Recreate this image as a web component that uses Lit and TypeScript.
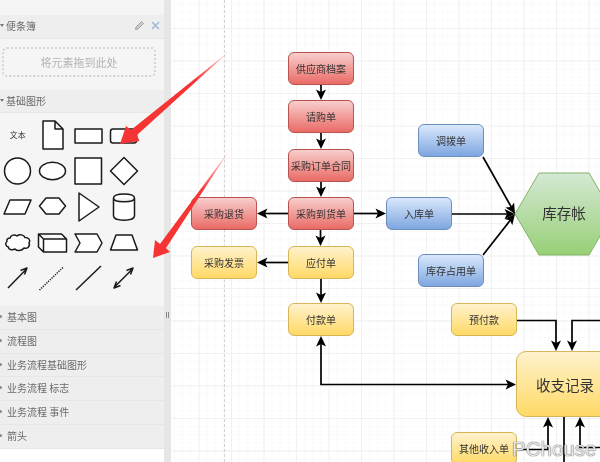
import { LitElement, html, css, svg } from "lit";
import { customElement } from "lit/decorators.js";

type Node = { t: string; x: number; y: number; c: string };
const NODES: Node[] = [
  { t: "供应商档案", x: 288, y: 52, c: "red" },
  { t: "请购单", x: 288, y: 100, c: "red" },
  { t: "采购订单合同", x: 288, y: 149, c: "red" },
  { t: "采购到货单", x: 288, y: 197, c: "red" },
  { t: "采购退货", x: 191, y: 197, c: "red" },
  { t: "采购发票", x: 191, y: 246, c: "yellow" },
  { t: "应付单", x: 288, y: 246, c: "yellow" },
  { t: "付款单", x: 288, y: 303, c: "yellow" },
  { t: "调拨单", x: 418, y: 124, c: "blue" },
  { t: "入库单", x: 386, y: 197, c: "blue" },
  { t: "库存占用单", x: 418, y: 254, c: "blue" },
  { t: "预付款", x: 451, y: 303, c: "yellow" },
  { t: "其他收入单", x: 451, y: 432, c: "yellow" },
];

const LINES: string[] = [
  "M321 84V96",
  "M321 133V145",
  "M321 181V193",
  "M320.500 230V242",
  "M321 279V299",
  "M288 213.500H261",
  "M354 213.500H382",
  "M288 262.500H261",
  "M321 340V384.500H512",
  "M483 157L513 210",
  "M451 214H511",
  "M483 255L512 218",
  "M516 320.500H556V347",
  "M600 320.500H572V347",
  "M516 449.500H548V421",
  "M564 417V462",
  "M600 447.500H580V421",
];

const HEADS: [number, number, number][] = [
  [321, 100, 90], [321, 149, 90], [321, 197, 90], [320.5, 246, 90], [321, 303, 90],
  [257, 213.5, 180], [386, 213.5, 0], [257, 262.5, 180],
  [321, 336, -90], [516, 384.5, 0],
  [515, 214, 60], [515, 214, 0], [515, 214, -51],
  [556, 351, 90], [572, 351, 90], [548, 417, -90], [580, 417, -90],
];

const SECTIONS = ["基本图", "流程图", "业务流程基础图形", "业务流程 标志", "业务流程 事件", "箭头"];

const SHAPES = [
  svg``,
  svg`<path d="M8 4H20L28 12V32H8Z M20 4V12H28"/>`,
  svg`<rect x="4" y="12" width="27" height="14"/>`,
  svg`<rect x="4.500" y="12" width="26" height="14" rx="2.500"/>`,
  svg`<circle cx="17.500" cy="18" r="13"/>`,
  svg`<ellipse cx="17.500" cy="18" rx="13" ry="8.700"/>`,
  svg`<rect x="4" y="5" width="26.500" height="26"/>`,
  svg`<path d="M18 4.500L31.500 18L18 31.500L4.500 18Z"/>`,
  svg`<path d="M4 25L10 11H31L25 25Z"/>`,
  svg`<path d="M4.500 17L11 9H24L30.500 17L24 25H11Z"/>`,
  svg`<path d="M8 4L28 18L8 32Z"/>`,
  svg`<path d="M7.500 9C7.500 3.500 28.500 3.500 28.500 9V27C28.500 32.500 7.500 32.500 7.500 27Z M7.500 9C7.500 14 28.500 14 28.500 9"/>`,
  svg`<path d="M10 13C11 9.500 15 9.500 17 11C19 9 24 9.500 25 12.500C28.500 12.500 31 15 29 18C30.500 21.500 27 24 24 23C22 26 17 26.500 15 24C12 25.500 8 24.500 8.500 22C5.500 21.500 4.800 18 7 16.500C6 14.500 8 13 10 13Z"/>`,
  svg`<path d="M3.500 9H26.500L31.500 14V27H8.500L3.500 22Z M3.500 9L8.500 14H31.500 M8.500 14V27"/>`,
  svg`<path d="M4 9H26L31 18L26 27H4L9 18Z"/>`,
  svg`<path d="M4.500 25L10 10H26L31.500 25Z"/>`,
  svg`<path d="M8 27L27 7.500 M20.500 9.500L27 7L24.500 13.500"/>`,
  svg`<path class="dots" d="M4.500 29L28.500 6"/>`,
  svg`<path d="M5 29L30 5"/>`,
  svg`<path d="M8 26.500L27 7.500 M20.500 9.500L27 7L24.500 13.500 M14.500 24.500L8 27L10.500 20.500"/>`,
];

@customElement("app-root")
export class AppRoot extends LitElement {
  static styles = css`
    :host {
      display: block;
      width: 600px;
      height: 462px;
      overflow: hidden;
      font-family: "Noto Sans CJK SC", "Noto Sans", sans-serif;
      background: #fff;
    }
    .root {
      position: relative;
      display: flex;
      width: 600px;
      height: 462px;
      overflow: hidden;
      filter: blur(0.5px);
    }
    .sidebar {
      width: 164px;
      flex: none;
      display: flex;
      flex-direction: column;
      background: #fff;
    }
    .top {
      height: 15px;
      background: #f5f5f5;
    }
    .head {
      height: 23.700px;
      box-sizing: border-box;
      flex: none;
      display: flex;
      align-items: center;
      gap: 2px;
      padding-bottom: 2px;
      background: #eee;
      color: #6a6a6a;
      font-size: 10px;
      border-bottom: 1px solid #e6e6e6;
    }
    .caret {
      width: 0;
      height: 0;
      border-left: 2.500px solid transparent;
      border-right: 2.500px solid transparent;
      border-top: 3px solid #777;
      flex: none;
    }
    .caret.closed {
      border: none;
      width: 3px;
      height: 3px;
      border-radius: 50%;
      background: #888;
      margin-left: -1px;
      margin-right: 3px;
    }
    .head .tools {
      margin-left: auto;
      margin-right: 4px;
      display: flex;
      gap: 6px;
      align-items: center;
    }
    .pad {
      height: 51px;
      flex: none;
      box-sizing: border-box;
      padding: 8px 8px 13px 2px;
      background: #f5f5f5;
    }
    .drop {
      height: 30px;
      border: 2px dotted #d4d4d4;
      border-radius: 5px;
      box-sizing: border-box;
      display: flex;
      align-items: center;
      justify-content: center;
      color: #b4b4b4;
      font-size: 11px;
    }
    .shapes {
      height: 193px;
      flex: none;
      box-sizing: border-box;
      padding-top: 4px;
      background: #f5f5f5;
      display: grid;
      grid-template-columns: repeat(4, 35.500px);
      grid-auto-rows: 36px;
      align-content: start;
    }
    .cell {
      position: relative;
      display: flex;
      align-items: center;
      justify-content: center;
    }
    .cell svg {
      width: 36px;
      height: 36px;
      flex: none;
      fill: #fff;
      stroke: #1a1a1a;
      stroke-width: 1.500;
      stroke-linejoin: round;
    }
    .cell svg .dots {
      stroke-dasharray: 1.200 1.200;
    }
    .cell svg.open {
      fill: none;
    }
    .label {
      font-size: 8px;
      color: #333;
      position: absolute;
      margin-top: -2px;
    }
    .gutter {
      width: 7px;
      flex: none;
      background: #e6e6e6;
      display: flex;
      justify-content: center;
      padding-top: 312px;
      box-sizing: border-box;
      gap: 1px;
    }
    .gutter i {
      width: 1px;
      height: 6px;
      background: #888;
    }
    .canvas {
      flex: 1;
      position: relative;
      background-color: #fff;
      background-image:
        linear-gradient(#f1f1f1 1px, transparent 1px),
        linear-gradient(90deg, #f1f1f1 1px, transparent 1px),
        linear-gradient(#fafafa 1px, transparent 1px),
        linear-gradient(90deg, #fafafa 1px, transparent 1px);
      background-size: 32.500px 32.500px, 32.500px 32.500px, 8.125px 8.125px, 8.125px 8.125px;
      background-position: 0 28px, 27.500px 0, 0 28px, 27.500px 0;
    }
    .overlay {
      position: absolute;
      left: 0;
      top: 0;
      width: 600px;
      height: 462px;
      pointer-events: none;
    }
    .node {
      position: absolute;
      width: 66px;
      height: 33px;
      box-sizing: border-box;
      border-radius: 6px;
      border: 1px solid;
      display: flex;
      align-items: center;
      justify-content: center;
      font-size: 10px;
      color: #333;
      white-space: nowrap;
    }
    .node.big {
      width: 98px;
      height: 66px;
      font-size: 14.500px;
      border-radius: 10px;
    }
    .red {
      background: linear-gradient(#f8cecc, #ea6b66);
      border-color: #b85450;
    }
    .yellow {
      background: linear-gradient(#fff2cc, #ffd966);
      border-color: #d6b656;
    }
    .blue {
      background: linear-gradient(#dae8fc, #7ea6e0);
      border-color: #6c8ebf;
    }
    .wires path {
      fill: none;
      stroke: #000;
      stroke-width: 1.700;
    }
    .tips path {
      fill: #000;
      stroke: none;
    }
    .hextext {
      font-size: 14.500px;
      fill: #333;
      text-anchor: middle;
    }
    .dash {
      position: absolute;
      left: 53px;
      top: 0;
      bottom: 0;
      border-left: 1px dashed #d2d2d2;
    }
    .mark {
      position: absolute;
      left: 512px;
      top: 437px;
      font-family: "Liberation Sans", sans-serif;
      font-size: 20.500px;
      line-height: 23px;
      color: rgba(255, 255, 255, 0.85);
      text-shadow: 0 0 1px #555, 0 0 1px #555;
      white-space: nowrap;
    }
  `;

  private header(title: string, open: boolean, tools = false) {
    return html`<div class="head">
      <span class="caret ${open ? "" : "closed"}"></span><span>${title}</span>
      ${tools
        ? html`<span class="tools">
            <svg width="11" height="11" viewBox="0 0 11 11">
              <path d="M1.500 9.500L2 7L7.500 1.500L9.500 3.500L4 9Z" fill="#ccc" stroke="#9a9a9a" stroke-width="0.900"></path>
            </svg>
            <svg width="9" height="9" viewBox="0 0 9 9">
              <path d="M1 1L8 8M8 1L1 8" stroke="#a3bcd4" stroke-width="1.700" fill="none"></path>
            </svg>
          </span>`
        : ""}
    </div>`;
  }

  render() {
    return html`<div class="root">
      <div class="sidebar">
        <div class="top"></div>
        ${this.header("便条簿", true, true)}
        <div class="pad"><div class="drop">将元素拖到此处</div></div>
        ${this.header("基础图形", true)}
        <div class="shapes">
          ${SHAPES.map(
            (s, i) => html`<div class="cell">
              ${i === 0 ? html`<span class="label">文本</span>` : ""}
              <svg class="${i >= 16 ? "open" : ""}" viewBox="0 0 36 36">${s}</svg>
            </div>`
          )}
        </div>
        ${SECTIONS.map((s) => this.header(s, false))}
      </div>
      <div class="gutter"><i></i><i></i></div>
      <div class="canvas"><div class="dash"></div></div>

      <svg class="overlay" viewBox="0 0 600 462">
        <g class="wires">${LINES.map((d) => svg`<path d=${d}></path>`)}</g>
      </svg>

      ${NODES.map(
        (n) => html`<div class="node ${n.c}" style="left:${n.x}px;top:${n.y}px">${n.t}</div>`
      )}
      <div class="node big yellow" style="left:516px;top:351px">收支记录</div>

      <svg class="overlay" viewBox="0 0 600 462">
        <defs>
          <linearGradient id="hex" x1="0" y1="0" x2="0" y2="1">
            <stop offset="0" stop-color="#d5e8d4"></stop>
            <stop offset="1" stop-color="#97d077"></stop>
          </linearGradient>
          <linearGradient id="a1" gradientUnits="userSpaceOnUse" x1="232" y1="49" x2="195" y2="80">
            <stop offset="0" stop-color="#ff3b3b" stop-opacity="0.050"></stop>
            <stop offset="1" stop-color="#f73434"></stop>
          </linearGradient>
          <linearGradient id="a2" gradientUnits="userSpaceOnUse" x1="231" y1="148" x2="200" y2="190">
            <stop offset="0" stop-color="#ff3b3b" stop-opacity="0.050"></stop>
            <stop offset="1" stop-color="#f73434"></stop>
          </linearGradient>
        </defs>
        <path d="M515 214L539 173H589L613 214L589 255H539Z" fill="url(#hex)" stroke="#82b366" stroke-width="1"></path>
        <text class="hextext" x="564" y="219">库存帐</text>
        <g class="tips">
          ${HEADS.map(
            ([x, y, a]) =>
              svg`<path transform="translate(${x} ${y}) rotate(${a})" d="M0 0L-10.500 -5L-8 0L-10.500 5Z"></path>`
          )}
        </g>
        <path d="M120 144L126 126L131 130L232 49L137 135L139.500 141Z" fill="url(#a1)"></path>
        <path d="M153 258L155 240L160 244L231 148L166 248L170 252Z" fill="url(#a2)"></path>
      </svg>
      <div class="mark">PChouse</div>
    </div>`;
  }
}
